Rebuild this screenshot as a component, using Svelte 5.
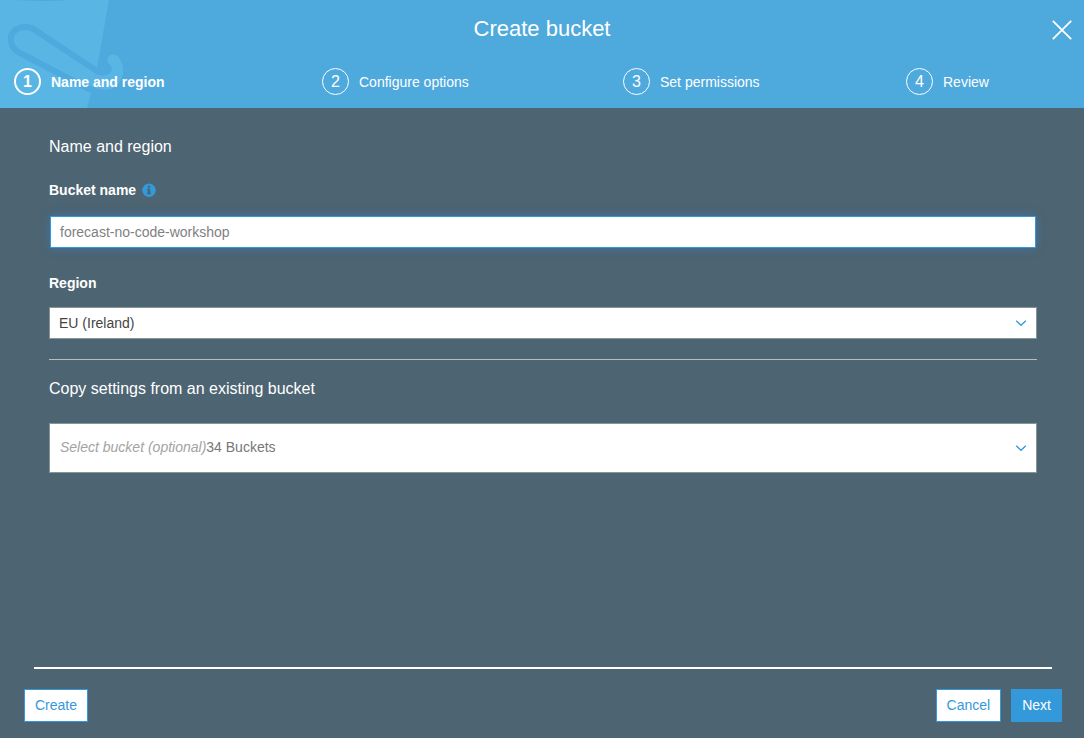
<script>
  const steps = ['Name and region', 'Configure options', 'Set permissions', 'Review'];
  const current = 0;
  let name = $state('');
  let region = $state('EU (Ireland)');
  let source = $state('');
</script>

{#snippet chevron()}
  <svg class="chevron" width="12" height="8" viewBox="0 0 12 8" aria-hidden="true">
    <path d="M1.2 1.7 6 6.3 10.8 1.7" fill="none" stroke="#3399db" stroke-width="1.3" />
  </svg>
{/snippet}

<div class="dialog" role="dialog" aria-labelledby="title">
  <header>
    <svg class="art" width="128" height="108" viewBox="0 0 128 108" aria-hidden="true">
      <path d="M0 0H109L97 68 92 90 87 108H0Z" fill="#58b5e4" />
      <path d="M17 0H70Q44 2 17 0Z" fill="#4ea9dd" />
      <path d="M92 90.500 19 52.500C6 45 8 27 26 27Q31 27 35 30L97 71" fill="none" stroke="#4ea9dd" stroke-width="6" />
      <path d="M96 74Q106 78 111 72 113 67 109 64 106 61 108 57 112 52 118 56 124 64 123 74 119 90 105 90 97 89 91 86Z" fill="#58b5e4" />
    </svg>
    <div class="titlebar">
      <h1 id="title">Create bucket</h1>
      <button class="close" aria-label="Close">
        <svg width="20" height="20" viewBox="0 0 20 20" aria-hidden="true">
          <path d="M.8.8 19.200 19.200M19.200.8.8 19.200" stroke="#fff" stroke-width="1.8" />
        </svg>
      </button>
    </div>
    <ol>
      {#each steps as step, i}
        <li class:active={i === current} aria-current={i === current ? 'step' : undefined}>
          <span class="num">{i + 1}</span>{step}
        </li>
      {/each}
    </ol>
  </header>

  <main>
    <h2>Name and region</h2>
    <div class="label">
      <label for="name">Bucket name</label>
      <svg width="14" height="14" viewBox="0 0 14 14" aria-hidden="true">
        <circle cx="7" cy="7.300" r="6.700" fill="#3399db" />
        <path d="M5.800 2.800H8.200V4.800H5.800ZM5 5.800H8.200V9.800H9V11.300H5V9.800H5.800V7.300H5Z" fill="#4d6472" />
      </svg>
    </div>
    <input id="name" type="text" placeholder="forecast-no-code-workshop" bind:value={name} />

    <div class="label region"><label for="region">Region</label></div>
    <div class="field">
      <select id="region" bind:value={region}>
        <option>EU (Ireland)</option>
      </select>
      {@render chevron()}
    </div>
    <hr />
    <h2><label for="source">Copy settings from an existing bucket</label></h2>
    <div class="field tall">
      <select id="source" bind:value={source}>
        <option value=""></option>
      </select>
      <span class="hint"><em>Select bucket (optional)</em>34 Buckets</span>
      {@render chevron()}
    </div>
  </main>

  <footer>
    <div class="rule"></div>
    <div class="actions">
      <button>Create</button>
      <button class="cancel">Cancel</button>
      <button class="primary">Next</button>
    </div>
  </footer>
</div>

<style>
  :global(body) {
    background: #4d6472;
  }
  .dialog {
    display: flex;
    flex-direction: column;
    min-height: 100vh;
    color: #fff;
    font: 14px/20px "Liberation Sans", Arial, sans-serif;
  }
  header {
    position: relative;
    background: #4ea9dd;
    height: 108px;
  }
  .art {
    position: absolute;
    left: 0;
    top: 0;
  }
  .titlebar {
    position: relative;
    display: grid;
    grid-template-columns: 1fr auto 1fr;
    align-items: center;
    height: 60px;
    padding: 0 12px;
  }
  h1 {
    grid-column: 2;
    margin: 0 0 2px;
    font-size: 22px;
    line-height: 28px;
    font-weight: 400;
  }
  .close {
    justify-self: end;
    display: flex;
    padding: 0;
    border: 0;
    background: none;
    cursor: pointer;
  }
  ol {
    position: relative;
    display: grid;
    grid-template-columns: 308fr 301fr 283fr 178fr;
    margin: 0;
    padding: 8px 0 0 14px;
    list-style: none;
  }
  li {
    display: flex;
    align-items: center;
    gap: 10px;
  }
  .num {
    box-sizing: border-box;
    width: 27px;
    height: 27px;
    border: 1px solid #fff;
    border-radius: 50%;
    font-size: 16px;
    line-height: 25px;
    text-align: center;
  }
  .active {
    font-weight: 700;
  }
  .active .num {
    border-width: 2px;
    line-height: 23px;
  }
  main {
    flex: 1;
    padding: 29px 47px 28px 49px;
  }
  h2 {
    margin: 0;
    font-size: 16px;
    line-height: 20px;
    font-weight: 400;
  }
  .label {
    display: flex;
    align-items: center;
    gap: 6px;
    margin: 23px 0 16px;
    font-weight: 700;
  }
  .label.region {
    margin: 25px 0 14px;
  }
  input,
  select {
    box-sizing: border-box;
    width: 100%;
    height: 32px;
    margin: 0;
    padding: 0 9px;
    border: 1px solid #879596;
    border-radius: 0;
    background: #fff;
    color: #444;
    font: inherit;
    appearance: none;
  }
  input {
    display: block;
    width: calc(100% - 2px);
    margin-left: 1px;
    border-color: #3399db;
    box-shadow: 0 0 10px #3388db80;
    outline: 0;
  }
  input::placeholder {
    color: #7f7f7f;
  }
  .field {
    display: grid;
    align-items: center;
  }
  .field > * {
    grid-area: 1 / 1;
  }
  .chevron {
    justify-self: end;
    margin-right: 10px;
    pointer-events: none;
  }
  .tall select {
    height: 50px;
  }
  .hint {
    padding: 0 0 2px 11px;
    color: #777;
    pointer-events: none;
  }
  .hint em {
    color: #a3a3a3;
  }
  hr {
    height: 1px;
    margin: 20px 0 19px;
    border: 0;
    background: #bbb;
  }
  h2 + .tall {
    margin-top: 24px;
  }
  .rule {
    height: 2px;
    margin: 0 32px 0 34px;
    background: #fff;
  }
  .actions {
    display: flex;
    gap: 10px;
    padding: 20px 22px 16px 24px;
  }
  .actions button {
    height: 33px;
    padding: 0 10px 2px;
    border: 1px solid #3399db;
    background: #fff;
    color: #3399db;
    font: inherit;
    cursor: pointer;
  }
  .actions .cancel {
    margin-left: auto;
  }
  .actions .primary {
    background: #3399db;
    color: #fff;
  }
</style>
